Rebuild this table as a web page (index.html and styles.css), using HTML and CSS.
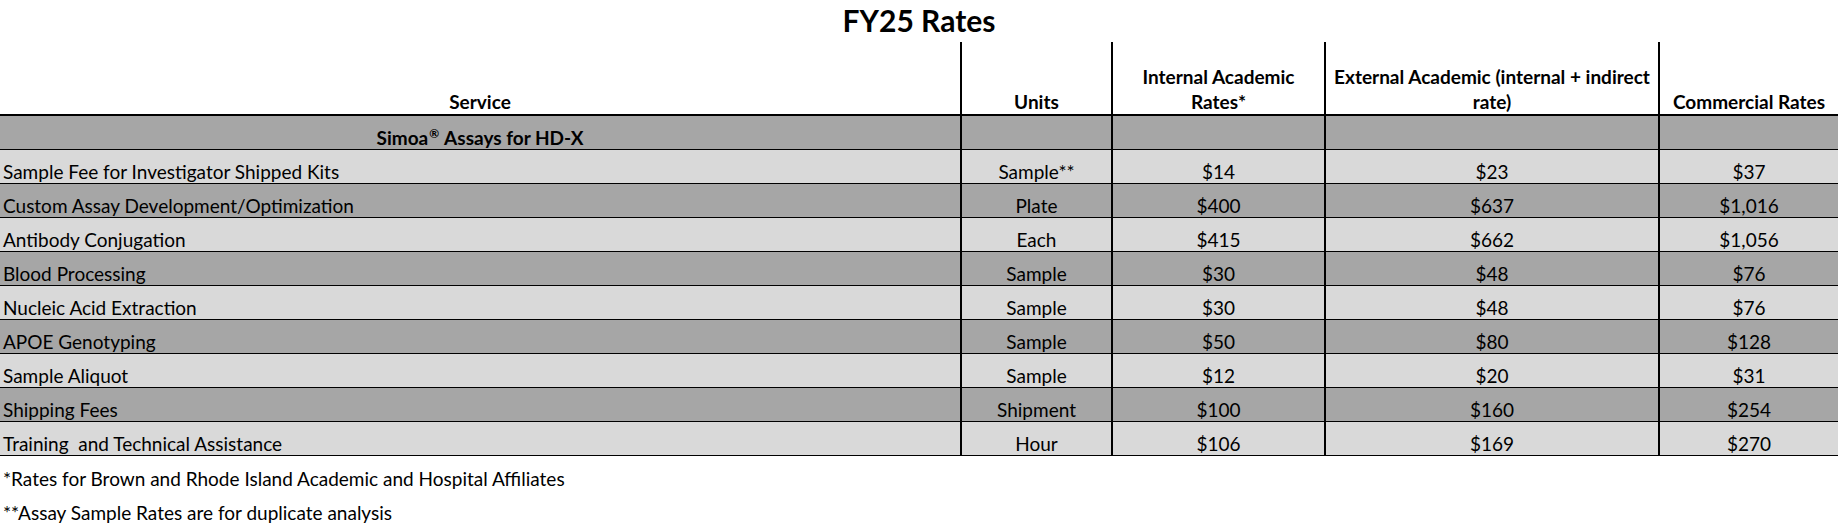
FILE: index.html
```html
<!DOCTYPE html>
<html lang="en">
<head>
<meta charset="utf-8">
<title>FY25 Rates</title>
<link rel="stylesheet" href="styles.css">
</head>
<body>
<div class="sheet">
  <div class="title">FY25 Rates</div>
  <div class="row head">
    <div class="cell c1"><span>Service</span></div>
    <div class="cell num"><span>Units</span></div>
    <div class="cell num"><span>Internal Academic<br>Rates*</span></div>
    <div class="cell num"><span>External Academic (internal + indirect<br>rate)</span></div>
    <div class="cell num"><span>Commercial Rates</span></div>
  </div>
  <div class="row dark first">
    <div class="cell c1 section"><span>Simoa<sup>®</sup> Assays for HD-X</span></div>
    <div class="cell num"></div>
    <div class="cell num"></div>
    <div class="cell num"></div>
    <div class="cell num"></div>
  </div>
  <div class="row light">
    <div class="cell c1"><span>Sample Fee for Investigator Shipped Kits</span></div>
    <div class="cell num"><span>Sample**</span></div>
    <div class="cell num"><span>$14</span></div>
    <div class="cell num"><span>$23</span></div>
    <div class="cell num"><span>$37</span></div>
  </div>
  <div class="row dark">
    <div class="cell c1"><span>Custom Assay Development/Optimization</span></div>
    <div class="cell num"><span>Plate</span></div>
    <div class="cell num"><span>$400</span></div>
    <div class="cell num"><span>$637</span></div>
    <div class="cell num"><span>$1,016</span></div>
  </div>
  <div class="row light">
    <div class="cell c1"><span>Antibody Conjugation</span></div>
    <div class="cell num"><span>Each</span></div>
    <div class="cell num"><span>$415</span></div>
    <div class="cell num"><span>$662</span></div>
    <div class="cell num"><span>$1,056</span></div>
  </div>
  <div class="row dark">
    <div class="cell c1"><span>Blood Processing</span></div>
    <div class="cell num"><span>Sample</span></div>
    <div class="cell num"><span>$30</span></div>
    <div class="cell num"><span>$48</span></div>
    <div class="cell num"><span>$76</span></div>
  </div>
  <div class="row light">
    <div class="cell c1"><span>Nucleic Acid Extraction</span></div>
    <div class="cell num"><span>Sample</span></div>
    <div class="cell num"><span>$30</span></div>
    <div class="cell num"><span>$48</span></div>
    <div class="cell num"><span>$76</span></div>
  </div>
  <div class="row dark">
    <div class="cell c1"><span>APOE Genotyping</span></div>
    <div class="cell num"><span>Sample</span></div>
    <div class="cell num"><span>$50</span></div>
    <div class="cell num"><span>$80</span></div>
    <div class="cell num"><span>$128</span></div>
  </div>
  <div class="row light">
    <div class="cell c1"><span>Sample Aliquot</span></div>
    <div class="cell num"><span>Sample</span></div>
    <div class="cell num"><span>$12</span></div>
    <div class="cell num"><span>$20</span></div>
    <div class="cell num"><span>$31</span></div>
  </div>
  <div class="row dark">
    <div class="cell c1"><span>Shipping Fees</span></div>
    <div class="cell num"><span>Shipment</span></div>
    <div class="cell num"><span>$100</span></div>
    <div class="cell num"><span>$160</span></div>
    <div class="cell num"><span>$254</span></div>
  </div>
  <div class="row light">
    <div class="cell c1"><span>Training&nbsp; and Technical Assistance</span></div>
    <div class="cell num"><span>Hour</span></div>
    <div class="cell num"><span>$106</span></div>
    <div class="cell num"><span>$169</span></div>
    <div class="cell num"><span>$270</span></div>
  </div>
  <div class="note"><span>*Rates for Brown and Rhode Island Academic and Hospital Affiliates</span></div>
  <div class="note"><span>**Assay Sample Rates are for duplicate analysis</span></div>
</div>
</body>
</html>
```

FILE: styles.css
```css
html, body {
  margin: 0;
  padding: 0;
  background: #ffffff;
}
body {
  font-family: Lato, "Open Sans", sans-serif;
  color: #000000;
  font-size: 19px;
}
.sheet {
  width: 1838px;
}
.title {
  height: 42px;
  font-size: 30px;
  font-weight: 700;
  text-align: center;
  line-height: 40px;
  box-sizing: border-box;
}
.row {
  display: grid;
  grid-template-columns: 960px 151px 213px 334px 180px;
  height: 34px;
  box-sizing: border-box;
  border-bottom: 1px solid #000000;
}
.row.head {
  height: 74px;
  border-bottom: 2px solid #000000;
  font-weight: 700;
  background: #ffffff;
}
.row.dark { background: #a6a6a6; }
.row.light { background: #d9d9d9; }
.cell {
  display: flex;
  align-items: flex-end;
  padding: 0 3px 0 3px;
  line-height: 22px;
  white-space: nowrap;
}
.head .cell {
  line-height: 25px;
  padding-bottom: 0;
}
.cell.num {
  border-left: 2px solid #000000;
  justify-content: center;
  text-align: center;
}
.head .cell.c1 {
  justify-content: center;
}
.cell.section {
  justify-content: center;
  font-weight: 700;
}
.section sup {
  font-size: 12px;
  line-height: 0;
  vertical-align: 0;
  position: relative;
  top: -7px;
  margin: 0 1px;
}
.note {
  height: 34px;
  display: flex;
  align-items: flex-end;
  padding: 0 3px 0 3px;
  line-height: 22px;
  box-sizing: border-box;
}
```
